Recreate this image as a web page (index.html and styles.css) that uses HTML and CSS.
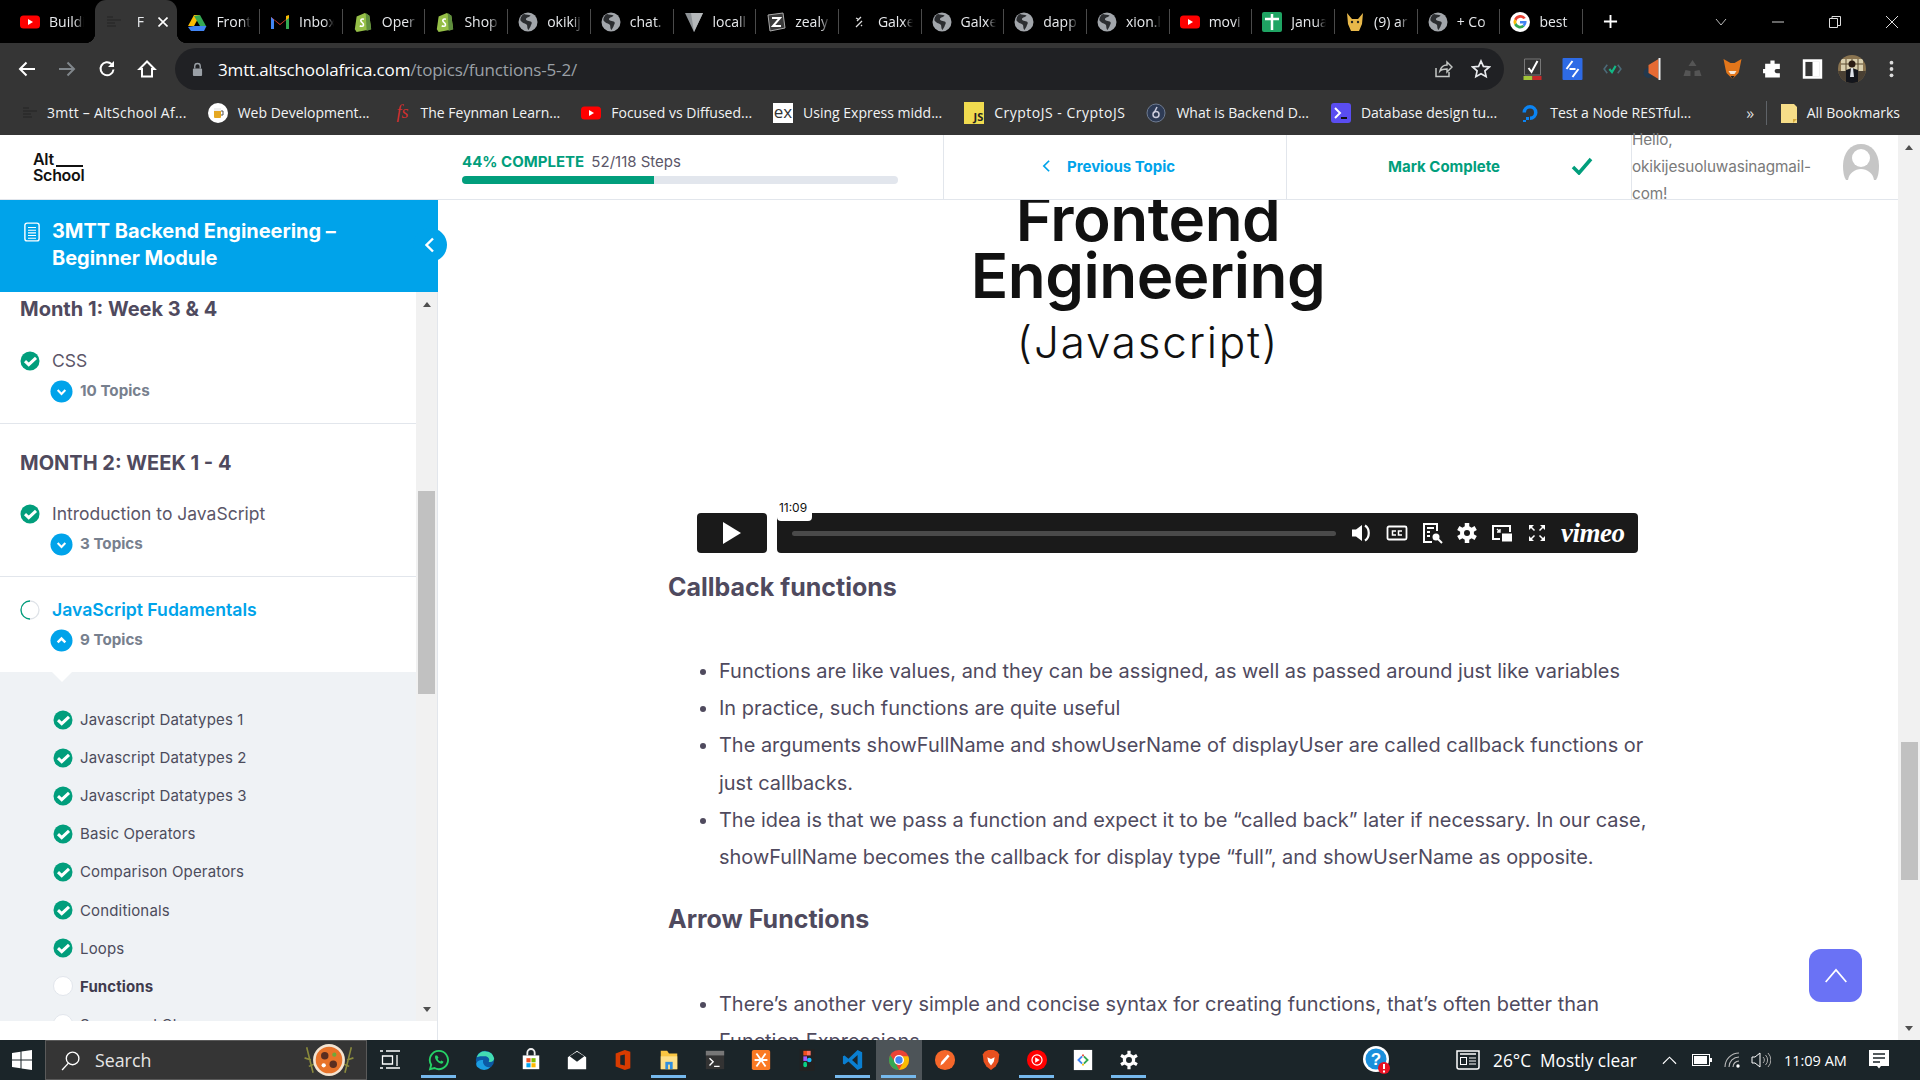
FILE: index.html
```html
<!DOCTYPE html>
<html lang="en">
<head>
<meta charset="utf-8">
<title>Functions – 3MTT AltSchool</title>
<link rel="stylesheet" href="styles.css">
</head>
<body>
<svg class="sprite" width="0" height="0">
  <defs>
    <symbol id="yt" viewBox="0 0 20 20"><rect y="3.500" width="20" height="13" rx="3.500" fill="#f00"/><path d="M8 7l5 3-5 3z" fill="#fff"/></symbol>
    <symbol id="globe" viewBox="0 0 20 20"><circle cx="10" cy="10" r="9.500" fill="#a2a6ab"/><path d="M6 2c2 1 5 .5 6.500 1.500-1 2-4 1.500-4.500 3.500s3.500 1.500 5.500 3c1 1.500-1 3-1 4.500l-2 3.500c-1.500-1-1-3.500-1.500-5-1-1.500-5-2-6.500-4.500C2 6 4 3 6 2z" fill="#2b2d30"/></symbol>
    <symbol id="shop" viewBox="0 0 20 22"><path d="M3 5l9-4 5 3 2 15-16 3L1 19z" fill="#95bf47"/><path d="M13 1l1 20 5-2-2-15z" fill="#5e8e3e"/><path d="M11 8c-3-1-4 1-3 2.500s3 1.500 2.500 4c-.5 1.500-3 1.500-4 .5" fill="none" stroke="#fff" stroke-width="1.800"/></symbol>
    <symbol id="check" viewBox="0 0 20 20"><circle cx="10" cy="10" r="9.500" fill="#019e7c"/><path d="M5 10.200l3.700 3.400L16 6.800" fill="none" stroke="#fff" stroke-width="3"/></symbol>
    <symbol id="down" viewBox="0 0 24 24"><circle cx="12" cy="12" r="11.500" fill="#00a3ea"/><path d="M8 10.500l4 4 4-4" fill="none" stroke="#fff" stroke-width="2.200"/></symbol>
    <symbol id="up" viewBox="0 0 24 24"><circle cx="12" cy="12" r="11.500" fill="#00a3ea"/><path d="M8 14l4-4 4 4" fill="none" stroke="#fff" stroke-width="2.600"/></symbol>
    <symbol id="mini" viewBox="0 0 20 20"><path d="M3 5h6M3 8h14M3 11h8M3 14h9" stroke="#2a2a2a" stroke-width="1.600"/></symbol>
  </defs>
</svg>

<div class="tabstrip">
  <div class="tab tab-nosep"><svg class="fav"><use href="#yt"/></svg><span class="tabt">Buildi</span></div>
  <div class="tab tab-active"><svg class="fav"><use href="#mini"/></svg><span class="tabt tabt-short">F</span><svg class="tabx" viewBox="0 0 10 10"><path d="M.5.500l9 9M9.500.500l-9 9" stroke="#fff" stroke-width="1.600"/></svg></div>
  <div class="tab"><svg class="fav" viewBox="0 0 20 20"><path d="M7 2h6l-6 11H1z" fill="#fbbc04" transform="translate(0 1)"/><path d="M13 2l6 11h-6L7 3z" fill="#34a853" transform="translate(0 1)"/><path d="M1 15l3 4h13l2.500-5H7z" fill="#4285f4"/></svg><span class="tabt">Front</span></div>
  <div class="tab"><svg class="fav" viewBox="0 0 20 20"><path d="M1 5l9 7 9-7v12h-3V8l-6 5-6-5v9H1z" fill="#ea4335"/><path d="M1 5v12h3V8z" fill="#4285f4"/><path d="M19 5v12h-3V8z" fill="#34a853"/><path d="M16 4l3-1v3l-3 2z" fill="#fbbc04"/></svg><span class="tabt">Inbox</span></div>
  <div class="tab"><svg class="fav"><use href="#shop"/></svg><span class="tabt">Oper</span></div>
  <div class="tab"><svg class="fav"><use href="#shop"/></svg><span class="tabt">Shop</span></div>
  <div class="tab"><svg class="fav"><use href="#globe"/></svg><span class="tabt">okikij</span></div>
  <div class="tab"><svg class="fav"><use href="#globe"/></svg><span class="tabt">chat.</span></div>
  <div class="tab"><svg class="fav" viewBox="0 0 20 20"><path d="M1 1h18l-9 19z" fill="#8d9296"/><path d="M7 1h12l-9 19z" fill="#b5b8ba"/></svg><span class="tabt">locall</span></div>
  <div class="tab"><svg class="fav" viewBox="0 0 20 20"><path d="M2 3l15-2 2 15-15 3z" fill="#3a3a3a" stroke="#aaa"/><path d="M6 6h8L7 14h8" fill="none" stroke="#fff" stroke-width="2"/></svg><span class="tabt">zealy</span></div>
  <div class="tab"><svg class="fav" viewBox="0 0 20 20"><path d="M12 5L8 9M13 9l-6 6M7 6l2 1M12 13l1 1" stroke="#ddd" stroke-width="1.300"/></svg><span class="tabt">Galxe</span></div>
  <div class="tab"><svg class="fav"><use href="#globe"/></svg><span class="tabt">Galxe</span></div>
  <div class="tab"><svg class="fav"><use href="#globe"/></svg><span class="tabt">dapp</span></div>
  <div class="tab"><svg class="fav"><use href="#globe"/></svg><span class="tabt">xion.l</span></div>
  <div class="tab"><svg class="fav"><use href="#yt"/></svg><span class="tabt">movi</span></div>
  <div class="tab"><svg class="fav" viewBox="0 0 20 20"><rect width="20" height="20" rx="2" fill="#1fa463"/><path d="M3 7h14M10 2v16" stroke="#fff" stroke-width="2.500"/></svg><span class="tabt">Janua</span></div>
  <div class="tab"><svg class="fav" viewBox="0 0 20 20"><path d="M2 1l5 6h6l5-6-1 11-3 7H6l-3-7z" fill="#e8b84a"/><circle cx="7" cy="10" r="1.200" fill="#222"/><circle cx="13" cy="10" r="1.200" fill="#222"/></svg><span class="tabt">(9) ar</span></div>
  <div class="tab"><svg class="fav"><use href="#globe"/></svg><span class="tabt">+ Co</span></div>
  <div class="tab"><svg class="fav" viewBox="0 0 20 20"><circle cx="10" cy="10" r="10" fill="#fff"/><path d="M15.700 6A6.500 6.500 0 0 0 4.200 7l2.300 2A4 4 0 0 1 13.300 7z" fill="#ea4335"/><path d="M4.200 7a6.500 6.500 0 0 0 0 6l2.300-2a4 4 0 0 1 0-2z" fill="#fbbc04"/><path d="M4.200 13a6.500 6.500 0 0 0 10.400 1.500L12.500 13A4 4 0 0 1 6.500 11z" fill="#34a853"/><path d="M16.500 9H10v2.500h3.700a3 3 0 0 1-1.200 1.500l2.100 1.500A6.500 6.500 0 0 0 16.500 9z" fill="#4285f4"/></svg><span class="tabt">best</span></div>
  <svg class="plus" viewBox="0 0 16 16"><path d="M8 1v14M1 8h14" stroke="#fff" stroke-width="2"/></svg>
  <div class="winctl">
    <svg class="winic" viewBox="0 0 14 14"><path d="M2 4l5 6 5-6" fill="none" stroke="#bbb"/></svg>
    <svg class="winic" viewBox="0 0 14 14"><path d="M1 7h12" stroke="#ccc"/></svg>
    <svg class="winic" viewBox="0 0 14 14"><path d="M1.500 3.500h8v9h-8zM4 3.500V1.500h8.500v9h-3" fill="none" stroke="#ddd"/></svg>
    <svg class="winic" viewBox="0 0 14 14"><path d="M1 1l12 12M13 1L1 13" stroke="#ddd"/></svg>
  </div>
</div>

<div class="toolbar">
  <div class="navbtns">
    <svg class="navic" viewBox="0 0 20 20"><path d="M18 10H3M9.500 3.500L3 10l6.500 6.500" fill="none" stroke="#fff" stroke-width="2"/></svg>
    <svg class="navic" viewBox="0 0 20 20"><path d="M2 10h15M10.500 3.500L17 10l-6.500 6.500" fill="none" stroke="#80868b" stroke-width="2"/></svg>
    <svg class="navic" viewBox="0 0 20 20"><path d="M16.500 10.500a6.500 6.500 0 1 1-2-5.500" fill="none" stroke="#fff" stroke-width="2"/><path d="M17 2v6h-6z" fill="#fff"/></svg>
    <svg class="navic" viewBox="0 0 20 20"><path d="M10 2.500L2.500 10H5v7.500h10V10h2.500z" fill="none" stroke="#fff" stroke-width="2"/></svg>
  </div>
  <div class="omni">
    <svg class="lock" viewBox="0 0 12 16"><path d="M3 7V4.500a3 3 0 0 1 6 0V7" fill="none" stroke="#9aa0a6" stroke-width="1.500"/><rect x="1" y="7" width="10" height="8" rx="1" fill="#9aa0a6"/></svg>
    <span class="url">3mtt.altschoolafrica.com<span class="urlpath">/topics/functions-5-2/</span></span>
    <svg class="omniic" viewBox="0 0 20 20"><path d="M3 9v8.500h13V13M7 12c1-4 4-6 7-6V3l5 5-5 5v-3c-3 0-5 0-7 2z" fill="none" stroke="#c4c7c5" stroke-width="1.500"/></svg>
    <svg class="omniic" viewBox="0 0 20 20"><path d="M10 2l2.400 5.400 5.900.6-4.400 3.900 1.200 5.800L10 14.800l-5.100 2.900 1.200-5.800L1.700 8l5.900-.6z" fill="none" stroke="#e8eaed" stroke-width="1.700"/></svg>
  </div>
  <div class="exts">
    <svg class="ext" viewBox="0 0 20 24"><path d="M2 2h16v16H2z" fill="#333" stroke="#777"/><path d="M6 11l3 4 6-11" fill="none" stroke="#fff" stroke-width="2"/><rect x="1" y="19" width="9" height="4" fill="#a4c639"/><rect x="10" y="19" width="9" height="4" fill="#c62828"/></svg>
    <svg class="ext" viewBox="0 0 20 24"><rect y="1" width="20" height="22" rx="1" fill="#2e6be6"/><path d="M4 12l6-8M10 20l6-8M7 12h6" stroke="#fff" stroke-width="2"/></svg>
    <svg class="ext" viewBox="0 0 20 20"><path d="M5 6l-3 4 3 4M15 6l3 4-3 4" fill="none" stroke="#4b6a78" stroke-width="1.500"/><path d="M7 10l2.500 3L13 7" fill="none" stroke="#12b886" stroke-width="2"/></svg>
    <svg class="ext" viewBox="0 0 20 24"><circle cx="6" cy="16" r="5" fill="#22384d"/><path d="M6 8l10-6v20L6 16z" fill="#e66a33"/><rect x="16" y="1" width="2" height="22" fill="#eee"/></svg>
    <svg class="ext" viewBox="0 0 20 24"><path d="M10 3l4 6H6zM3 13l-2 6h7v-5zM17 13l2 6h-7v-5z" fill="#555"/></svg>
    <svg class="ext" viewBox="0 0 20 24"><path d="M1 2l7 4h4l7-4-2 10-1 4-6 6-6-6-1-4z" fill="#e2761b"/><path d="M6 14h8l-2 3h-4z" fill="#f6e8d8"/><path d="M8 19h4l-2 3z" fill="#222"/></svg>
    <svg class="ext" viewBox="0 0 20 20"><path d="M8 2h4v3h5v5h-3a2 2 0 0 0 0 4h3v4H3v-4H1v-4h2V5h5z" fill="#fff"/></svg>
    <svg class="ext" viewBox="0 0 20 20"><rect x="2" y="2" width="16" height="16" fill="none" stroke="#fff" stroke-width="2.500"/><rect x="3" y="3" width="7" height="14" fill="#fff" transform="translate(7 0)"/></svg>
    <svg class="avatar" viewBox="0 0 28 28"><defs><clipPath id="ac"><circle cx="14" cy="14" r="14"/></clipPath></defs><g clip-path="url(#ac)"><rect width="28" height="28" fill="#8a7450"/><rect x="3" y="4" width="22" height="12" fill="#d9cfae"/><path d="M8 4v12M14 4v6M20 4v12M3 9h22" stroke="#5a4a30"/><rect x="0" y="16" width="28" height="12" fill="#4a4033"/><circle cx="14" cy="9" r="3.500" fill="#2a1c14"/><path d="M8 28v-13l6-2 6 2v13z" fill="#14161c"/><path d="M13 13h2l1 9h-4z" fill="#dfe3ea"/></g></svg>
    <svg class="ext" viewBox="0 0 20 20"><circle cx="10" cy="4" r="1.800" fill="#ddd"/><circle cx="10" cy="10" r="1.800" fill="#ddd"/><circle cx="10" cy="16" r="1.800" fill="#ddd"/></svg>
  </div>
</div>

<div class="bookmarks">
  <div class="bm bm-a"><svg class="bmi"><use href="#mini"/></svg><span>3mtt – AltSchool Af...</span></div>
  <div class="bm bm-b"><svg class="bmi" viewBox="0 0 20 20"><circle cx="10" cy="10" r="10" fill="#fff"/><rect x="6" y="5" width="7" height="10" rx="1" fill="#e5a823"/><rect x="6" y="5" width="7" height="3" fill="#eee"/><path d="M13 8h2v4h-2" fill="none" stroke="#555"/></svg><span>Web Development...</span></div>
  <div class="bm bm-c"><span class="fsmark">fs</span><span>The Feynman Learn...</span></div>
  <div class="bm bm-d"><svg class="bmi"><use href="#yt"/></svg><span>Focused vs Diffused...</span></div>
  <div class="bm bm-e"><span class="exmark">ex</span><span>Using Express midd...</span></div>
  <div class="bm bm-f"><span class="jsmark">JS</span><span>CryptoJS - CryptoJS</span></div>
  <div class="bm bm-g"><svg class="bmi" viewBox="0 0 20 20"><circle cx="10" cy="10" r="9" fill="#2e3b55" stroke="#6e7b91"/><circle cx="10" cy="11.500" r="3" fill="none" stroke="#ccd" stroke-width="1.500"/><path d="M11 4L8 10" stroke="#ccd" stroke-width="1.500"/></svg><span>What is Backend D...</span></div>
  <div class="bm bm-h"><svg class="bmi" viewBox="0 0 20 20"><rect width="20" height="20" rx="3" fill="#5a4df0"/><path d="M4 5l5 5-5 5" fill="none" stroke="#fff" stroke-width="2"/><path d="M10 15h6" stroke="#111" stroke-width="2"/></svg><span>Database design tu...</span></div>
  <div class="bm bm-i"><svg class="bmi" viewBox="0 0 20 20"><path d="M10 17a7.500 7.500 0 1 0-7.500-7.500h3.500A4 4 0 1 1 10 13.500z" fill="#0b84f3"/><path d="M6 14h3v3H6zM3 17h3v2H3z" fill="#0b84f3"/></svg><span>Test a Node RESTful...</span></div>
  <span class="bm-more">»</span>
  <span class="bm-div"></span>
  <div class="bm"><svg class="bmfolder" viewBox="0 0 16 20"><path d="M0 1h13l3 3v16H0z" fill="#f6dd88"/><path d="M12 20v-4h4z" fill="#d4a93c"/></svg><span>All Bookmarks</span></div>
</div>

<div class="app">
  <div class="appcol">
    <header class="hdr">
      <div class="logo"><div class="logo-top">Alt<span class="logo-line"></span></div><div>School</div></div>
      <div class="prog">
        <div class="prog-label"><b>44% COMPLETE</b> 52/118 Steps</div>
        <div class="prog-track"><div class="prog-fill"></div></div>
      </div>
      <div class="hcell hcell-prev"><svg class="hchev" viewBox="0 0 10 16"><path d="M8 2L2 8l6 6" fill="none" stroke="#00a3ea" stroke-width="2"/></svg><span>Previous Topic</span></div>
      <div class="hcell hcell-mark"><span>Mark Complete</span><svg class="hcheck" viewBox="0 0 22 18"><path d="M2 10l6 6L20 2" fill="none" stroke="#019e7c" stroke-width="3.500"/></svg></div>
      <div class="hcell-user">
        <div class="hello">Hello,<br>okikijesuoluwasinagmail-<br>com!</div>
        <svg class="userpic" viewBox="0 0 38 38"><path d="M1 23C1 9 9 1 19 1s18 8 18 22c0 6-1 11-3 14H4C2 34 1 29 1 23z" fill="#c6c6c6"/><circle cx="19" cy="15" r="9" fill="#fff"/><path d="M6 37c1-7 7-11 13-11s12 4 13 11z" fill="#fff"/></svg>
      </div>
    </header>
    <div class="body">
      <aside class="side">
        <div class="banner">
          <svg class="docic" viewBox="0 0 18 22"><rect x="1" y="1" width="16" height="20" rx="2.500" fill="none" stroke="#fff" stroke-width="1.600"/><path d="M4.500 6h9M4.500 9h9M4.500 12h9M4.500 15h9M4.500 18h9" stroke="#fff" stroke-width="1.200"/></svg>
          <h1 class="course">3MTT Backend Engineering – Beginner Module</h1>
          <span class="collapse"><svg class="collapse-ic" viewBox="0 0 10 16"><path d="M8 1.500L1.500 8 8 14.500" fill="none" stroke="#fff" stroke-width="2.400"/></svg></span>
        </div>
        <div class="listwrap">
          <div class="list">
            <section class="sec sec-first">
              <h2 class="month">Month 1: Week 3 &amp; 4</h2>
              <div class="lesson"><svg class="lcheck"><use href="#check"/></svg><span>CSS</span></div>
              <div class="topics"><svg class="tcirc"><use href="#down"/></svg><span>10 Topics</span></div>
            </section>
            <section class="sec sec-two">
              <h2 class="month">MONTH 2: WEEK 1 - 4</h2>
              <div class="lesson"><svg class="lcheck"><use href="#check"/></svg><span>Introduction to JavaScript</span></div>
              <div class="topics"><svg class="tcirc"><use href="#down"/></svg><span>3 Topics</span></div>
            </section>
            <section class="sec sec-open">
              <div class="lesson lesson-cur"><svg class="lcheck" viewBox="0 0 20 20"><circle cx="10" cy="10" r="9" fill="none" stroke="#dfe3e8" stroke-width="1.300"/><path d="M10 1a9 9 0 0 0 0 18" fill="none" stroke="#019e7c" stroke-width="1.300"/></svg><span>JavaScript Fudamentals</span></div>
              <div class="topics"><svg class="tcirc"><use href="#up"/></svg><span>9 Topics</span></div>
            </section>
            <div class="sub">
              <div class="item"><svg class="icheck"><use href="#check"/></svg><span>Javascript Datatypes 1</span></div>
              <div class="item"><svg class="icheck"><use href="#check"/></svg><span>Javascript Datatypes 2</span></div>
              <div class="item"><svg class="icheck"><use href="#check"/></svg><span>Javascript Datatypes 3</span></div>
              <div class="item"><svg class="icheck"><use href="#check"/></svg><span>Basic Operators</span></div>
              <div class="item"><svg class="icheck"><use href="#check"/></svg><span>Comparison Operators</span></div>
              <div class="item"><svg class="icheck"><use href="#check"/></svg><span>Conditionals</span></div>
              <div class="item"><svg class="icheck"><use href="#check"/></svg><span>Loops</span></div>
              <div class="item item-cur"><span class="iempty"></span><span>Functions</span></div>
              <div class="item"><span class="iempty"></span><span>Scope and Closures</span></div>
            </div>
          </div>
          <div class="sbar">
            <span class="arr arr-up"></span>
            <span class="sthumb"></span>
            <span class="arr arr-down"></span>
          </div>
        </div>
      </aside>
      <main class="main">
        <article class="article">
          <div class="vtitle">
            <div class="vt1">Frontend</div>
            <div class="vt1">Engineering</div>
            <div class="vt2">(Javascript)</div>
          </div>
          <div class="vbar">
            <span class="vplay"><svg class="vplay-ic" viewBox="0 0 18 22"><path d="M0 0l18 11L0 22z" fill="#fff"/></svg></span>
            <div class="vctl">
              <span class="vtip">11:09</span>
              <span class="vtrack"></span>
              <svg class="vic" viewBox="0 0 22 22"><path d="M1 7.500h4L11 3v16l-6-4.500H1z" fill="#fff"/><path d="M14 3.500c5 3 5 12 0 15" fill="none" stroke="#fff" stroke-width="2.200"/></svg>
              <svg class="vic" viewBox="0 0 22 22"><rect x="1.500" y="4.500" width="19" height="13" rx="1.500" fill="none" stroke="#fff" stroke-width="1.800"/><path d="M10 9H6.500v4H10M16 9h-3.500v4H16" fill="none" stroke="#fff" stroke-width="1.500"/></svg>
              <svg class="vic" viewBox="0 0 22 22"><path d="M16 9V2H3v18h8" fill="none" stroke="#fff" stroke-width="2"/><path d="M6 6h7M6 10h3M6 14h3" stroke="#fff" stroke-width="1.800"/><circle cx="15" cy="15" r="3.500" fill="#fff"/><path d="M17 17l4 4" stroke="#fff" stroke-width="2"/></svg>
              <svg class="vic" viewBox="0 0 22 22"><path d="M11 1v20M2.300 6l17.400 10M2.300 16L19.700 6" stroke="#fff" stroke-width="4.500"/><circle cx="11" cy="11" r="7" fill="#fff"/><circle cx="11" cy="11" r="3" fill="#1a1a1a"/></svg>
              <svg class="vic" viewBox="0 0 22 22"><path d="M9 17H2V4h17v6" fill="none" stroke="#fff" stroke-width="2"/><rect x="11" y="11.500" width="10" height="8" fill="#fff"/><path d="M6 7l3 3M9 7v3H6" fill="none" stroke="#fff" stroke-width="1.400"/></svg>
              <svg class="vic" viewBox="0 0 22 22"><path d="M3 8V3h5zM19 8V3h-5zM19 14v5h-5zM3 14v5h5z" fill="#fff"/><path d="M5 5l3.500 3.500M17 5l-3.500 3.500M17 17l-3.500-3.500M5 17l3.500-3.500" stroke="#fff" stroke-width="1.500"/></svg>
              <span class="vimeo">vimeo</span>
            </div>
          </div>
          <h2 class="h-sec h-cb">Callback functions</h2>
          <ul class="pts pts-cb">
            <li>Functions are like values, and they can be assigned, as well as passed around just like variables</li>
            <li>In practice, such functions are quite useful</li>
            <li>The arguments showFullName and showUserName of displayUser are called callback functions or just callbacks.</li>
            <li>The idea is that we pass a function and expect it to be “called back” later if necessary. In our case, showFullName becomes the callback for display type “full”, and showUserName as opposite.</li>
          </ul>
          <h2 class="h-sec h-arrow">Arrow Functions</h2>
          <ul class="pts pts-ar">
            <li>There’s another very simple and concise syntax for creating functions, that’s often better than Function Expressions.</li>
          </ul>
        </article>
        <span class="totop"><svg class="totop-ic" viewBox="0 0 26 16"><path d="M2 15L13 2l11 13" fill="none" stroke="#fff" stroke-width="1.800"/></svg></span>
      </main>
    </div>
  </div>
  <div class="pagebar">
    <span class="arr arr-up"></span>
    <span class="pthumb"></span>
    <span class="arr arr-down"></span>
  </div>
</div>

<footer class="taskbar">
  <svg class="win" viewBox="0 0 20 20"><path d="M0 3l8.500-1.200V9.500H0zM9.500 1.600L20 0v9.500H9.500zM0 10.500h8.500v7.700L0 17zM9.500 10.500H20V20L9.500 18.400z" fill="#fff"/></svg>
  <div class="search">
    <svg class="sic" viewBox="0 0 20 20"><circle cx="12" cy="8" r="6" fill="none" stroke="#fff" stroke-width="1.300"/><path d="M8 12.500L2 19" stroke="#fff" stroke-width="1.300"/></svg>
    <span class="stext">Search</span>
    <svg class="doodle" viewBox="0 0 50 32"><path d="M4 4l6 24M46 4l-6 24M2 14l6 2M48 14l-6 2M6 22l5-2M44 22l-5-2" stroke="#8a8a3c" stroke-width="1.500"/><circle cx="25" cy="16" r="15" fill="#f4e4d2"/><circle cx="25" cy="16" r="12.500" fill="#e8732a"/><circle cx="21" cy="12" r="3.500" fill="#5b2e20"/><circle cx="29" cy="20" r="3.500" fill="#5b2e20"/><circle cx="30" cy="11" r="2" fill="#6ea83a"/><circle cx="20" cy="21" r="2" fill="#fff"/></svg>
  </div>
  <svg class="taskview" viewBox="0 0 20 20"><path d="M0 1h3M6 1h14M17 5v11M0 18h3M6 18h14M2.500 6h10v8h-10z" fill="none" stroke="#fff" stroke-width="1.300"/></svg>
  <div class="apps">
    <span class="app-slot app-on"><svg class="appic" viewBox="0 0 24 24"><path d="M12 2a10 10 0 0 0-8.500 15.300L2.200 22l4.900-1.200A10 10 0 1 0 12 2z" fill="none" stroke="#25d366" stroke-width="2"/><path d="M8 7c-1 2 0 5 3 7.500 2 1.500 4 2 5 1l1-1.500-2.500-1.500-1 1c-1.500-.5-2.500-1.500-3-3l1-1L10 7z" fill="#25d366"/></svg></span>
    <span class="app-slot"><svg class="appic" viewBox="0 0 24 24"><circle cx="12" cy="12" r="10" fill="#0c59a4"/><path d="M3 9a10 10 0 0 1 19 1c0 3-3 5-6 4 2-3-1-6-4-6-4 0-7 0-9 1z" fill="#43dcb2"/><path d="M10 12c-1 4 2 8 8 8a10 10 0 0 1-14 0c-3-3-2-8 6-8z" fill="#1b9de2"/></svg></span>
    <span class="app-slot"><svg class="appic" viewBox="0 0 24 24"><path d="M3 7h18v15H3z" fill="#fff"/><path d="M8 7V4a4 4 0 0 1 8 0v3" fill="none" stroke="#eee" stroke-width="2"/><rect x="7" y="10" width="4.500" height="4.500" fill="#f25022"/><rect x="12.500" y="10" width="4.500" height="4.500" fill="#7fba00"/><rect x="7" y="15.500" width="4.500" height="4.500" fill="#00a4ef"/><rect x="12.500" y="15.500" width="4.500" height="4.500" fill="#ffb900"/></svg></span>
    <span class="app-slot"><svg class="appic" viewBox="0 0 24 24"><path d="M2 9l10-7 10 7v13H2z" fill="#fff"/><path d="M4 8l8 6 8-6-8-5z" fill="#1b2529"/></svg></span>
    <span class="app-slot"><svg class="appic" viewBox="0 0 24 24"><path d="M14 1L4 5v14l10 4 6-2V3z" fill="#d83b01"/><path d="M9 7l5-1v12l-5-1z" fill="#1b2529"/></svg></span>
    <span class="app-slot app-on"><svg class="appic" viewBox="0 0 24 24"><path d="M3 2h7l2 3h9v17H3z" fill="#f9c642"/><path d="M3 8h18v14H3z" fill="#fde08a"/><rect x="8" y="14" width="8" height="8" fill="#2f8fe0"/><rect x="11" y="17" width="2" height="5" fill="#fde08a"/></svg></span>
    <span class="app-slot"><svg class="appic" viewBox="0 0 24 24"><rect x="2" y="2" width="20" height="20" fill="#333"/><rect x="2" y="2" width="20" height="5" fill="#777"/><path d="M6 10l4 4-4 4M11 19h6" fill="none" stroke="#fff" stroke-width="1.500"/></svg></span>
    <span class="app-slot"><svg class="appic" viewBox="0 0 24 24"><rect x="2" y="1" width="20" height="22" rx="2" fill="#fb7a24"/><path d="M7 5l10 14M17 5L7 19M5 12h14" stroke="#fff" stroke-width="2"/></svg></span>
    <span class="app-slot"><svg class="appic" viewBox="0 0 24 24"><rect x="4" y="0" width="16" height="24" fill="#222"/><circle cx="14.500" cy="12" r="2.500" fill="#1abcfe"/><rect x="8" y="2" width="4" height="5" fill="#f24e1e"/><rect x="12" y="2" width="4" height="5" fill="#ff7262"/><rect x="8" y="8" width="4" height="5" fill="#a259ff"/><rect x="8" y="14" width="4" height="6" rx="2" fill="#0acf83"/></svg></span>
    <span class="app-slot app-on"><svg class="appic" viewBox="0 0 24 24"><path d="M17 1l5 2.500v17L17 23 7 13.500 2.800 17 1 16V8l1.800-1L7 10.500z" fill="#0a7fd1"/><path d="M17 6.500L11 12l6 5.500z" fill="#1b2529"/></svg></span>
    <span class="app-slot app-on app-cur"><svg class="appic" viewBox="0 0 24 24"><circle cx="12" cy="12" r="11" fill="#ea4335"/><path d="M12 23a11 11 0 0 1-9.500-16.500L8 15z" fill="#34a853"/><path d="M23 12a11 11 0 0 1-11 11l5-9-5-6h10a11 11 0 0 1 1 4z" fill="#fbbc04"/><circle cx="12" cy="12" r="5.500" fill="#fff"/><circle cx="12" cy="12" r="4" fill="#4285f4"/></svg></span>
    <span class="app-slot"><svg class="appic" viewBox="0 0 24 24"><circle cx="12" cy="12" r="11" fill="#f5672a"/><path d="M7 18l1-4 7-8 2 2-7 8z" fill="#fff"/></svg></span>
    <span class="app-slot"><svg class="appic" viewBox="0 0 24 24"><path d="M5 3l4-2h6l4 2 2 3-1 8-3 5-5 4-5-4-3-5-1-8z" fill="#e8501f"/><path d="M8 9l4 2 4-2-1 5-3 4-3-4z" fill="#fff"/></svg></span>
    <span class="app-slot app-on"><svg class="appic" viewBox="0 0 24 24"><circle cx="12" cy="12" r="11" fill="#f00"/><circle cx="12" cy="12" r="5.500" fill="none" stroke="#fff" stroke-width="1.300"/><path d="M10 9l5 3-5 3z" fill="#fff"/></svg></span>
    <span class="app-slot"><svg class="appic" viewBox="0 0 24 24"><rect x="2" y="1" width="20" height="22" fill="#fff"/><path d="M11 8l-4 4 4 4" fill="none" stroke="#4285f4" stroke-width="2"/><path d="M13 8l4 4-4 4" fill="none" stroke="#34a853" stroke-width="2"/><path d="M11 7l2 0" stroke="#ea4335" stroke-width="2"/><path d="M11 17l2 0" stroke="#fbbc04" stroke-width="2"/></svg></span>
    <span class="app-slot app-on"><svg class="appic" viewBox="0 0 24 24"><circle cx="12" cy="12" r="5" fill="none" stroke="#fff" stroke-width="3.500"/><path d="M12 2v4M12 18v4M3.300 7l3.500 2M17.200 15l3.500 2M3.300 17l3.500-2M17.200 9l3.500-2" stroke="#fff" stroke-width="3.500"/></svg></span>
  </div>
  <div class="tray">
    <svg class="helpic" viewBox="0 0 30 30"><circle cx="14" cy="14" r="13" fill="#fff"/><circle cx="14" cy="14" r="10.500" fill="#1a8fdc"/><text class="helpq" x="14" y="20">?</text><circle cx="22" cy="23" r="6" fill="#e81123"/><path d="M22 19v5M22 25.500v2" stroke="#fff" stroke-width="2"/></svg>
    <svg class="newsic" viewBox="0 0 24 22"><path d="M1 2h22v16a2 2 0 0 1-2 2H3a2 2 0 0 1-2-2z" fill="none" stroke="#fff" stroke-width="1.500"/><path d="M4 5h16" stroke="#fff" stroke-width="1.500"/><rect x="4.500" y="8.500" width="6" height="7" fill="none" stroke="#fff"/><path d="M13 9h7M13 12h7M13 15h7" stroke="#fff"/></svg>
    <span class="weather">26°C&nbsp; Mostly clear</span>
    <svg class="caretic" viewBox="0 0 16 10"><path d="M1 9l7-7 7 7" fill="none" stroke="#fff" stroke-width="1.200"/></svg>
    <svg class="battic" viewBox="0 0 20 12"><rect x=".5" y=".5" width="17" height="11" fill="none" stroke="#fff"/><rect x="2" y="2" width="13" height="8" fill="#fff"/><rect x="18" y="4" width="2" height="4" fill="#fff"/></svg>
    <svg class="wifiic" viewBox="0 0 18 18"><path d="M2 16A14 14 0 0 1 16 2M6 16A10 10 0 0 1 16 6M10 16a6 6 0 0 1 6-6" fill="none" stroke="#bbb" stroke-width="1.100"/><circle cx="15" cy="15" r="1.700" fill="#fff"/></svg>
    <svg class="volic" viewBox="0 0 20 18"><path d="M1 6h3l5-4v14l-5-4H1z" fill="none" stroke="#fff"/><path d="M12 6a4 4 0 0 1 0 6M14.500 4a7 7 0 0 1 0 10M17 2a10 10 0 0 1 0 14" fill="none" stroke="#aaa"/></svg>
    <span class="clock">11:09 AM</span>
    <svg class="notif" viewBox="0 0 20 20"><path d="M0 0h20v16H12l-2 2.500L8 16H0z" fill="#fff"/><path d="M4 4h12M4 8h12M4 12h7" stroke="#1b2529" stroke-width="1.300"/></svg>
  </div>
</footer>
</body>
</html>
```

FILE: styles.css
```css
* { box-sizing: border-box; }
html, body { margin: 0; padding: 0; }
body { width: 1920px; height: 1080px; overflow: hidden; display: flex; flex-direction: column; background: #fff; font-family: "Inter", "Liberation Sans", sans-serif; }
.sprite { position: absolute; }

/* browser tabs */
.tabstrip { height: 43px; flex: none; background: #000; display: flex; align-items: center; padding-left: 12px; font-family: "Open Sans", sans-serif; font-size: 14px; color: #e8eaed; }
.tab { width: 82.7px; height: 43px; flex: none; display: flex; align-items: center; padding-left: 10px; position: relative; }
.tab::after { content: ""; position: absolute; right: 0; top: 9px; width: 1px; height: 25px; background: #4a4a4a; }
.tab-nosep::after { display: none; }
.tab-nosep { padding-left: 8px; }
.tab > .tabt { white-space: nowrap; overflow: hidden; width: 35px; margin-left: 9px; -webkit-mask-image: linear-gradient(90deg, #000 72%, transparent); mask-image: linear-gradient(90deg, #000 72%, transparent); }
.tab > .tabt-short { width: 14px; margin-left: 13px; }
.tab-active { background: #353535; border-radius: 11px 11px 0 0; padding-left: 9px; }
.tab-active::before { content: ""; position: absolute; left: -10px; bottom: 0; width: 10px; height: 10px; background: radial-gradient(circle at 0 0, transparent 10px, #353535 10.500px); }
.tab-active::after { left: 100%; right: auto; top: auto; bottom: 0; width: 10px; height: 10px; background: radial-gradient(circle at 100% 0, transparent 10px, #353535 10.500px); z-index: 1; }
.tabx { width: 10px; height: 10px; margin-left: 7px; flex: none; }
.fav { width: 20px; height: 20px; flex: none; }
.plus { width: 15px; height: 15px; margin-left: 20px; }
.winctl { margin-left: auto; display: flex; align-items: center; gap: 43px; padding-right: 21px; }
.winic { width: 14px; height: 14px; }

/* toolbar */
.toolbar { height: 47px; flex: none; background: #353535; display: flex; align-items: flex-start; padding-top: 5px; }
.navbtns { display: flex; align-items: center; height: 42px; gap: 20px; padding-left: 17px; width: 175px; }
.navic { width: 20px; height: 20px; flex: none; }
.omni { width: 1329px; height: 42px; background: #202124; border-radius: 21px; display: flex; align-items: center; padding: 0 13px 0 17px; }
.lock { width: 11px; height: 15px; flex: none; }
.url { margin-left: 15px; font-family: "Open Sans", sans-serif; font-size: 17px; letter-spacing: -.15px; color: #fff; flex: 1; white-space: nowrap; }
.urlpath { color: #9aa0a6; }
.omniic { width: 20px; height: 20px; margin-left: 18px; flex: none; }
.exts { display: flex; align-items: center; height: 42px; gap: 19px; padding-left: 18px; }
.ext { width: 21px; height: 24px; flex: none; }
.avatar { width: 28px; height: 28px; flex: none; margin: 0 -4px; }

/* bookmarks */
.bookmarks { height: 45px; flex: none; background: #353535; display: flex; align-items: center; padding-left: 20px; font-family: "Open Sans", sans-serif; font-size: 14px; color: #f1f3f4; }
.bm { display: flex; align-items: center; gap: 10px; white-space: nowrap; margin-right: 20px; }
.bmi { width: 20px; height: 20px; flex: none; }
.bm-a { gap: 7px; letter-spacing: .25px; margin-right: 21px; }
.bm-b { margin-right: 27px; }
.bm-c { margin-right: 21px; }
.bm-d { margin-right: 21px; }
.bm-e { margin-right: 22px; }
.fsmark { width: 14px; font-family: "Liberation Serif", serif; font-style: italic; font-size: 18px; color: #d32f2f; }
.exmark { width: 20px; height: 20px; background: #fff; color: #333; font-size: 17px; line-height: 18px; text-align: center; }
.jsmark { width: 20px; height: 22px; background: #f0db4f; color: #222; font-size: 11px; font-weight: 700; line-height: 30px; text-align: right; padding-right: 1px; letter-spacing: 0; }
.bm-f { letter-spacing: .5px; margin-right: 21px; }
.bm-g { margin-right: 22px; }
.bm-h { margin-right: 23px; }
.bm-more { font-size: 16px; color: #ddd; margin-left: 35px; }
.bm-div { width: 1px; height: 24px; background: #5f6368; margin-left: 12px; margin-right: 14px; }
.bmfolder { width: 16px; height: 20px; flex: none; }

/* page */
.app { height: 905px; flex: none; display: flex; }
.appcol { width: 1898px; display: flex; flex-direction: column; }
.hdr { height: 65px; flex: none; display: flex; background: #fff; border-bottom: 1px solid #e2e6ec; position: relative; z-index: 2; }
.logo { width: 438px; padding: 17px 0 0 33px; flex: none; font-size: 16px; font-weight: 600; line-height: 15.500px; letter-spacing: -.3px; color: #111; }
.logo-top { display: flex; align-items: flex-end; gap: 2px; }
.logo-line { width: 27px; height: 2px; background: #111; margin-bottom: 1px; }
.prog { width: 505px; flex: none; padding: 18px 0 0 24px; }
.prog-label { font-size: 15px; color: #5b5668; line-height: 18px; white-space: nowrap; }
.prog-label b { color: #019e7c; font-weight: 700; margin-right: 3px; }
.prog-track { width: 436px; height: 8px; margin-top: 5px; border-radius: 4px; background: #e2e6ed; overflow: hidden; }
.prog-fill { width: 44%; height: 8px; background: #019e7c; }
.hcell { display: flex; align-items: center; font-size: 15px; font-weight: 700; border-left: 1px solid #e2e6ec; flex: none; white-space: nowrap; padding-bottom: 2px; }
.hcell-prev { width: 343px; padding-left: 98px; color: #00a3ea; gap: 16px; }
.hchev { width: 9px; height: 14px; }
.hcell-mark { width: 345px; padding-left: 101px; color: #019e7c; gap: 71px; }
.hcheck { width: 22px; height: 18px; }
.hcell-user { flex: 1; border-left: 1px solid #e2e6ec; display: flex; align-items: center; }
.hello { width: 210px; font-size: 15.300px; line-height: 27px; color: #7a7a7a; flex: none; letter-spacing: -.1px; white-space: nowrap; padding-bottom: 1px; }
.userpic { width: 38px; height: 38px; margin-bottom: 11px; flex: none; }

/* sidebar */
.body { flex: 1; display: flex; min-height: 0; }
.side { width: 438px; flex: none; border-right: 1px solid #e2e6ec; display: flex; flex-direction: column; }
.banner { height: 92px; flex: none; width: 438px; background: #00a3ea; display: flex; align-items: flex-start; padding: 18px 0 0 24px; position: relative; z-index: 1; }
.docic { width: 16px; height: 20px; margin-top: 4px; flex: none; }
.course { margin: 0 0 0 12px; font-size: 20px; line-height: 27px; font-weight: 700; color: #fff; width: 320px; letter-spacing: -.05px; }
.collapse { position: absolute; right: -9px; top: 28px; width: 34px; height: 34px; border-radius: 50%; background: #00a3ea; display: flex; align-items: center; justify-content: center; }
.collapse-ic { width: 10px; height: 16px; }
.listwrap { height: 729px; flex: none; display: flex; }
.list { width: 416px; height: 729px; overflow: hidden; flex: none; }
.sec { padding: 0 0 20px 20px; border-bottom: 1px solid #e2e6ec; }
.sec-first { padding-top: 2px; }
.month { margin: 0; padding-top: 24px; font-size: 20px; line-height: 30px; font-weight: 700; color: #4f4a5e; }
.sec-first .month { padding-top: 0; }
.lesson { display: flex; align-items: center; gap: 12px; font-size: 17.500px; line-height: 26px; color: #5b5668; margin-top: 24px; }
.sec-two .lesson { margin-top: 23px; }
.lcheck { width: 20px; height: 20px; flex: none; }
.topics { display: flex; align-items: center; gap: 7px; margin: 5px 0 0 30px; font-size: 15.200px; font-weight: 700; color: #77808e; line-height: 24px; }
.tcirc { width: 23px; height: 23px; flex: none; }
.sec-open { border-bottom: 0; padding-bottom: 20px; padding-top: 0; }
.lesson-cur { color: #00a3ea; font-weight: 600; margin-top: 20px; font-size: 17.600px; }
.sub { background: #eff2f5; padding: 28.500px 0 0 53px; position: relative; }
.sub::before { content: ""; position: absolute; left: 52px; top: 0; border: 10.500px solid transparent; border-bottom: 0; border-top-color: #fff; }
.item { height: 38.100px; display: flex; align-items: center; gap: 7px; font-size: 15px; letter-spacing: .15px; color: #4c4c5c; white-space: nowrap; }
.icheck { width: 20px; height: 20px; flex: none; }
.iempty { width: 20px; height: 20px; flex: none; border-radius: 50%; background: #fff; border: 1px solid #e2e6ec; }
.item-cur { font-weight: 700; color: #3f3b4d; letter-spacing: .1px; }

/* scrollbars */
.sbar { width: 21px; background: #f1f1f1; display: flex; flex-direction: column; align-items: center; flex: none; }
.arr { width: 0; height: 0; border-left: 4.500px solid transparent; border-right: 4.500px solid transparent; flex: none; }
.arr-up { border-bottom: 5px solid #505050; margin-top: 10px; }
.arr-down { border-top: 5px solid #505050; margin-top: auto; margin-bottom: 9px; }
.sthumb { width: 17px; height: 203px; background: #c1c1c1; margin-top: 184px; flex: none; }
.pagebar { width: 22px; flex: none; background: #f1f1f1; display: flex; flex-direction: column; align-items: center; }
.pthumb { width: 17px; height: 138px; background: #c1c1c1; margin-top: 592px; flex: none; }

/* article */
.main { flex: 1; position: relative; overflow: hidden; min-width: 0; }
.article { width: 990px; margin-left: 230px; color: #4f4a5e; }
.vtitle { width: 960px; text-align: center; color: #111; margin-top: -10px; }
.vt1 { font-size: 62px; line-height: 57px; font-weight: 600; letter-spacing: -.5px; }
.vt2 { font-size: 44px; line-height: 56px; font-weight: 300; letter-spacing: 1.800px; margin-top: 10px; }
.vbar { display: flex; gap: 10px; margin: 143px 0 0 29px; width: 941px; }
.vplay { width: 70px; height: 40px; border-radius: 4px; background: #1a1a1a; display: flex; align-items: center; justify-content: center; flex: none; }
.vplay-ic { width: 18px; height: 22px; }
.vctl { flex: 1; height: 40px; border-radius: 4px; background: #1a1a1a; display: flex; align-items: center; gap: 13px; padding: 0 11px 0 15px; position: relative; }
.vtip { position: absolute; left: 0; top: -14px; width: 35px; height: 22px; background: #fff; border-radius: 0 0 4px 4px; font-size: 12px; line-height: 18px; text-align: center; color: #111; padding-right: 3px; }
.vtrack { width: 544px; height: 5px; border-radius: 3px; background: #4a4a4a; flex: none; margin-right: 2px; }
.vic { width: 22px; height: 22px; flex: none; }
.vimeo { font-family: "Liberation Serif", serif; font-style: italic; font-weight: 700; font-size: 27px; line-height: 30px; letter-spacing: -.5px; color: #fff; }
.h-sec { margin: 0; font-size: 25px; line-height: 32px; font-weight: 700; color: #4f4a5e; }
.h-cb { margin-top: 18px; }
.h-arrow { margin-top: 27px; }
.pts { margin: 0; padding: 0 0 0 51px; font-size: 19.950px; line-height: 37.200px; }
.pts-cb { margin-top: 50px; }
.pts-ar { margin-top: 51px; }
.totop { position: absolute; left: 1371px; top: 749px; width: 53px; height: 53px; border-radius: 12px; background: #6a72f5; display: flex; align-items: center; justify-content: center; }
.totop-ic { width: 26px; height: 15px; }

/* windows taskbar */
.taskbar { height: 40px; flex: none; background: #1b2529; display: flex; align-items: center; font-family: "Open Sans", sans-serif; color: #fff; position: relative; z-index: 3; }
.win { width: 20px; height: 20px; margin-left: 12px; flex: none; }
.search { width: 322px; height: 40px; margin-left: 13px; background: #353535; border: 1px solid #5a5a5a; display: flex; align-items: center; padding-left: 14px; flex: none; }
.sic { width: 21px; height: 21px; flex: none; }
.stext { margin-left: 14px; font-size: 17.800px; color: #e6e6e6; }
.doodle { width: 54px; height: 34px; margin-left: auto; margin-right: 10px; }
.taskview { width: 20px; height: 20px; margin-left: 13px; flex: none; }
.apps { display: flex; margin-left: 16px; flex: none; }
.app-slot { width: 46px; height: 40px; display: flex; align-items: center; justify-content: center; position: relative; flex: none; }
.app-on::after { content: ""; position: absolute; left: 5px; right: 6px; bottom: 2px; height: 3px; background: #76b9ed; }
.app-cur { background: rgba(255, 255, 255, .22); }
.appic { width: 22px; height: 24px; }
.tray { flex: 1; display: flex; align-items: center; min-width: 0; }
.helpic { width: 30px; height: 30px; margin-left: 210px; flex: none; }
.helpq { font-family: "Liberation Sans", sans-serif; font-size: 17px; font-weight: 700; fill: #fff; text-anchor: middle; }
.newsic { width: 24px; height: 22px; margin-left: 64px; flex: none; }
.weather { font-size: 17.300px; margin-left: 13px; white-space: nowrap; }
.caretic { width: 15px; height: 10px; margin-left: 25px; flex: none; }
.battic { width: 20px; height: 12px; margin-left: 15px; flex: none; }
.wifiic { width: 18px; height: 18px; margin-left: 11px; flex: none; }
.volic { width: 20px; height: 18px; margin-left: 10px; flex: none; }
.clock { font-size: 14.500px; margin-left: 13px; white-space: nowrap; }
.notif { width: 20px; height: 20px; margin-left: 22px; flex: none; }
```
